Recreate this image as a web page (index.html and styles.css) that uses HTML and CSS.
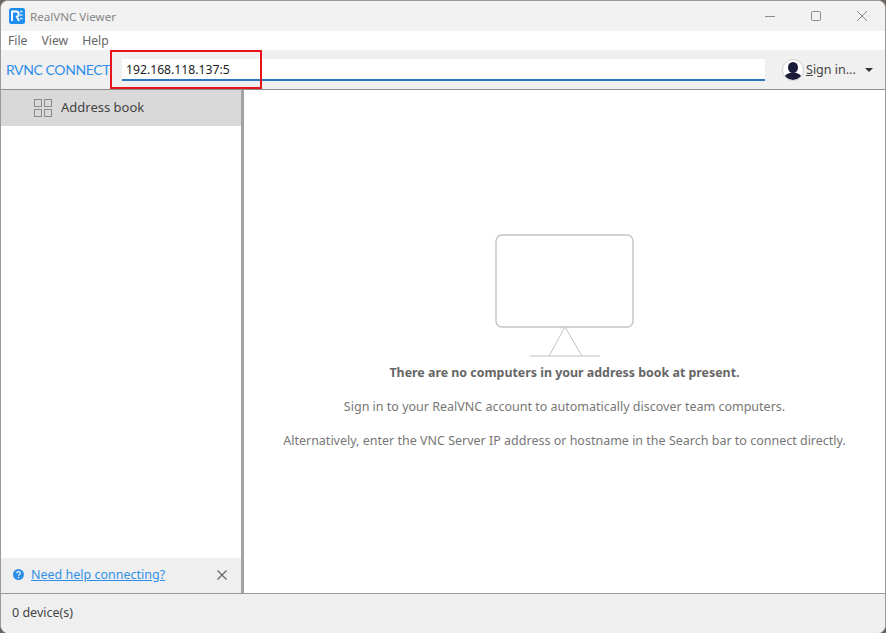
FILE: index.html
```html
<!DOCTYPE html>
<html lang="en">
<head>
<meta charset="UTF-8">
<title>RealVNC Viewer</title>
<link rel="stylesheet" href="styles.css">
</head>
<body>
<div class="window">
  <div class="titlebar">
    <svg class="app-icon" width="16" height="16" viewBox="0 0 16 16">
      <rect width="16" height="16" rx="2.5" fill="#1e8ef0"/>
      <path d="M3 13V3.5h4.2a2.6 2.6 0 0 1 .6 5.1L10 13" fill="none" stroke="#fff" stroke-width="1.9"/>
      <path d="M11 3.5h2.6M11 7h2.6M11 10.5h2.6" stroke="#cfe6fb" stroke-width="1.3"/>
    </svg>
    <span class="app-title">RealVNC Viewer</span>
    <div class="win-btns">
      <svg width="12" height="12" viewBox="0 0 12 12"><path d="M1 6.5h10" stroke="#8a8a8a"/></svg>
      <svg width="12" height="12" viewBox="0 0 12 12"><rect x="1.5" y="1.5" width="9" height="9" rx="1" fill="none" stroke="#8a8a8a"/></svg>
      <svg width="12" height="12" viewBox="0 0 12 12"><path d="M1 1l10 10M11 1L1 11" stroke="#8a8a8a"/></svg>
    </div>
  </div>
  <div class="menubar">
    <span>File</span><span>View</span><span>Help</span>
  </div>
  <div class="toolbar">
    <div class="logo">RVNC CONNECT</div>
    <div class="search">192.168.118.137:5</div>
    <div class="signin">
      <svg width="22" height="22" viewBox="0 0 22 22">
        <defs><clipPath id="avatar"><circle cx="11" cy="11" r="10"/></clipPath></defs>
        <circle cx="11" cy="11" r="10.5" fill="#fff" stroke="#cfcfcf"/>
        <g clip-path="url(#avatar)" fill="#1b1b3a">
          <ellipse cx="11" cy="8.5" rx="5" ry="5.5"/>
          <ellipse cx="11" cy="20" rx="9.5" ry="6.5"/>
        </g>
      </svg>
      <span class="signin-text"><u>S</u>ign in...</span>
      <span class="caret"></span>
    </div>
    <div class="annotation"></div>
  </div>
  <div class="main">
    <aside class="sidebar">
      <div class="side-item">
        <svg width="18" height="18" viewBox="0 0 18 18" fill="none" stroke="#8c8c8c">
          <rect x="0.5" y="0.5" width="7" height="7"/>
          <rect x="10.5" y="0.5" width="7" height="7"/>
          <rect x="0.5" y="10.5" width="7" height="7"/>
          <rect x="10.5" y="10.5" width="7" height="7"/>
        </svg>
        <span>Address book</span>
      </div>
      <div class="help">
        <svg width="11" height="11" viewBox="0 0 11 11">
          <circle cx="5.5" cy="5.5" r="5.5" fill="#2f8fe8"/>
          <path d="M3.8 4.2a1.7 1.7 0 1 1 2.6 1.4c-.6.4-.9.6-.9 1.2" fill="none" stroke="#fff" stroke-width="1.1"/>
          <circle cx="5.5" cy="8.5" r=".7" fill="#fff"/>
        </svg>
        <a class="help-link">Need help connecting?</a>
        <svg class="help-close" width="10" height="10" viewBox="0 0 10 10"><path d="M.5.5l9 9M9.5.5l-9 9" stroke="#606060" stroke-width="1.1"/></svg>
      </div>
    </aside>
    <section class="content">
      <svg class="monitor" width="140" height="124" viewBox="0 0 140 124" fill="none" stroke="#c4c4c4">
        <rect x="1" y="1" width="137" height="92" rx="6" stroke-width="1.4"/>
        <path d="M70 93L54 122M70 93l17 29"/>
        <path d="M35 122h70" stroke-width="1.2"/>
      </svg>
      <p class="empty-title">There are no computers in your address book at present.</p>
      <p class="empty-text">Sign in to your RealVNC account to automatically discover team computers.</p>
      <p class="empty-text">Alternatively, enter the VNC Server IP address or hostname in the Search bar to connect directly.</p>
    </section>
  </div>
  <div class="statusbar">0 device(s)</div>
</div>
</body>
</html>
```

FILE: styles.css
```css
html, body { margin: 0; height: 100%; }
body { background: #6b635c; font-family: "Noto Sans", "Open Sans", sans-serif; font-size: 13px; color: #333; overflow: hidden; }

.window { height: 633px; box-sizing: border-box; display: flex; flex-direction: column; background: #fff; border-radius: 8px; border: 1px solid #9a9a9a; border-bottom: none; overflow: hidden; }

.titlebar { height: 30px; flex: none; display: flex; align-items: center; padding-left: 8px; background: #f2f2f2; }
.app-title { margin-left: 5px; font-size: 11.6px; color: #858585; }
.win-btns { margin-left: auto; display: flex; align-items: center; gap: 34px; padding-right: 17px; }

.menubar { height: 19px; flex: none; display: flex; align-items: center; gap: 14px; padding-left: 7px; background: #fff; font-size: 12.2px; line-height: 17px; color: #666; }

.toolbar { height: 39px; flex: none; position: relative; display: flex; align-items: center; background: #f0f0f0; border-bottom: 1px solid #8f8f8f; }
.logo { width: 105px; margin-left: 5px; white-space: nowrap; font-family: "Lato", sans-serif; font-size: 14px; letter-spacing: -.4px; color: #2f8fe8; }
.search { width: 643px; height: 22px; margin-left: 11px; padding-left: 4px; box-sizing: border-box; line-height: 21px; background: #fff; border-bottom: 2px solid #2a77bd; font-size: 12.2px; color: #222; }
.signin { display: flex; align-items: center; margin-left: 17px; }
.signin-text { margin-left: 2px; font-size: 12.5px; color: #444; }
.caret { margin-left: 9px; border: 4px solid transparent; border-top: 4px solid #333; border-bottom: none; }
.annotation { position: absolute; left: 109px; top: 0; width: 152px; height: 39px; box-sizing: border-box; border: 2px solid #e8141c; }

.main { flex: 1; display: flex; min-height: 0; }

.sidebar { width: 240px; flex: none; display: flex; flex-direction: column; border-right: 3px solid #a3a3a3; }
.side-item { height: 36px; display: flex; align-items: center; gap: 9px; padding-left: 33px; padding-bottom: 2px; box-sizing: border-box; background: #d9d9d9; font-size: 13px; color: #444; }
.side-item svg { margin-top: 2px; }
.help { margin-top: auto; height: 35px; box-sizing: border-box; padding: 0 14px 2px 12px; display: flex; align-items: center; background: #efefef; }
.help-link { margin-left: 7px; color: #2f8fe8; text-decoration: underline; font-size: 12.5px; }
.help-close { margin-left: auto; }

.content { flex: 1; display: flex; flex-direction: column; align-items: center; padding-top: 144px; }
.monitor { flex: none; }
.content p { margin: 0; font-size: 12.5px; color: #777; }
.content .empty-title { margin-top: 6px; font-size: 12.4px; font-weight: 700; color: #666; }
.content .empty-text { margin-top: 17px; }

.statusbar { flex: none; display: flex; align-items: center; padding-left: 11px; padding-bottom: 2px; height: 37px; background: #efefef; border-top: 1px solid #9a9a9a; font-size: 12.5px; color: #444; }
```
